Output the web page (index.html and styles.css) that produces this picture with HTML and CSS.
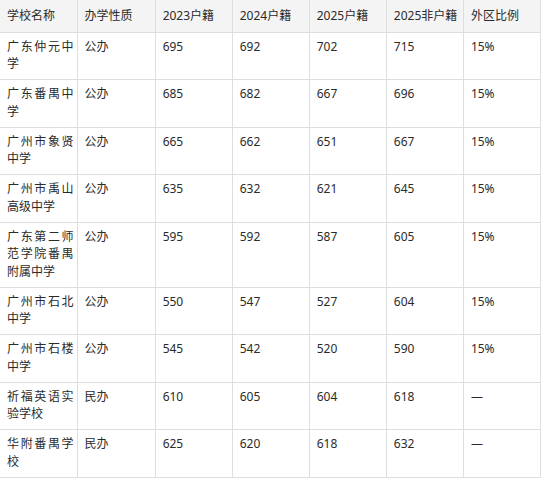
FILE: index.html
```html
<!DOCTYPE html>
<html lang="zh-CN">
<head>
<meta charset="utf-8">
<title>学校录取分数</title>
<link rel="stylesheet" href="styles.css">
</head>
<body>
<table class="score-table">
  <colgroup>
    <col class="c-name"><col class="c-type"><col class="c-y"><col class="c-y"><col class="c-y"><col class="c-y"><col class="c-y">
  </colgroup>
  <thead>
    <tr><th>学校名称</th><th>办学性质</th><th>2023户籍</th><th>2024户籍</th><th>2025户籍</th><th>2025非户籍</th><th>外区比例</th></tr>
  </thead>
  <tbody>
    <tr><td class="name">广东仲元中学</td><td>公办</td><td>695</td><td>692</td><td>702</td><td>715</td><td>15%</td></tr>
    <tr><td class="name">广东番禺中学</td><td>公办</td><td>685</td><td>682</td><td>667</td><td>696</td><td>15%</td></tr>
    <tr><td class="name">广州市象贤中学</td><td>公办</td><td>665</td><td>662</td><td>651</td><td>667</td><td>15%</td></tr>
    <tr><td class="name">广州市禹山高级中学</td><td>公办</td><td>635</td><td>632</td><td>621</td><td>645</td><td>15%</td></tr>
    <tr><td class="name">广东第二师范学院番禺附属中学</td><td>公办</td><td>595</td><td>592</td><td>587</td><td>605</td><td>15%</td></tr>
    <tr><td class="name">广州市石北中学</td><td>公办</td><td>550</td><td>547</td><td>527</td><td>604</td><td>15%</td></tr>
    <tr><td class="name">广州市石楼中学</td><td>公办</td><td>545</td><td>542</td><td>520</td><td>590</td><td>15%</td></tr>
    <tr><td class="name">祈福英语实验学校</td><td>民办</td><td>610</td><td>605</td><td>604</td><td>618</td><td>—</td></tr>
    <tr><td class="name">华附番禺学校</td><td>民办</td><td>625</td><td>620</td><td>618</td><td>632</td><td>—</td></tr>
  </tbody>
</table>
</body>
</html>
```

FILE: styles.css
```css
html, body {
  margin: 0;
  padding: 0;
  background: #ffffff;
}

.score-table {
  border-collapse: collapse;
  table-layout: fixed;
  width: 541px;
  font-family: "Noto Sans", "Noto Sans CJK SC", sans-serif;
  font-size: 12px;
  line-height: 17.5px;
  color: #2b2b2b;
}

.c-name { width: 77px; }
.c-type { width: 78px; }
.c-y { width: 77px; }

.score-table th,
.score-table td {
  border: 1px solid #dedede;
  text-align: left;
  vertical-align: top;
  font-weight: normal;
}

.score-table tr > :first-child {
  border-left: none;
}

.score-table thead th {
  border-top: none;
  background: #f4f4f4;
  padding: 7px 7px 7px 7px;
  white-space: nowrap;
}

.score-table td {
  padding: 5.25px 7px 6.25px 7px;
}

.score-table td.name {
  text-align: justify;
  padding-right: 3px;
}
```
